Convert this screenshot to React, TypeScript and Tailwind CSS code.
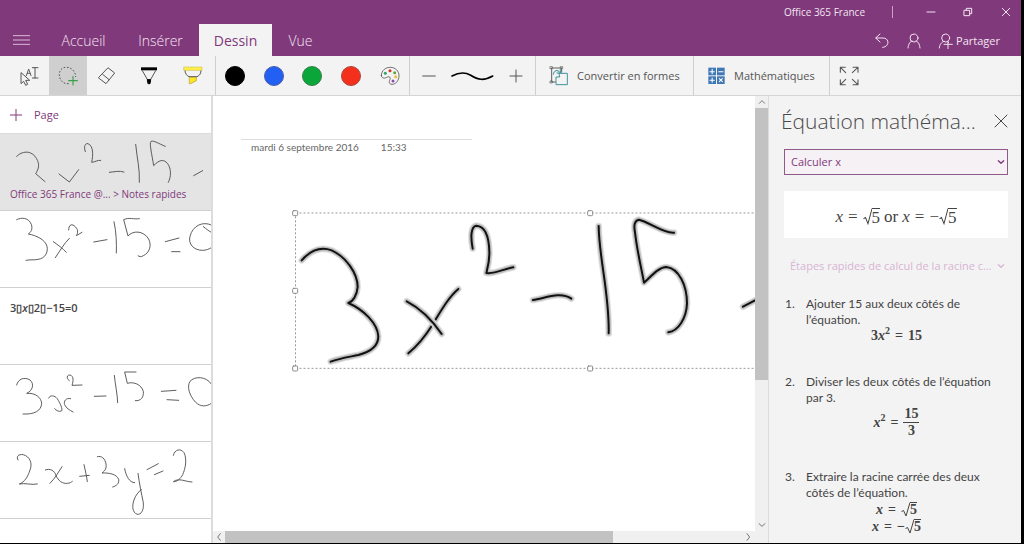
import type { ReactNode } from "react";

const ui = "font-['Open_Sans','Noto_Sans',sans-serif]";
const serif = "font-['Liberation_Serif',serif]";

function Icon({ box, className, children }: { box: string; className: string; children: ReactNode }) {
  return (
    <svg
      viewBox={box}
      className={className}
      fill="none"
      stroke="currentColor"
      strokeWidth={3}
      strokeLinecap="round"
      strokeLinejoin="round"
      aria-hidden="true"
    >
      {children}
    </svg>
  );
}

function Tab({ label, width, active }: { label: string; width: string; active?: boolean }) {
  return (
    <button
      type="button"
      className={`${width} h-full shrink-0 pt-px text-[14px] leading-4 ${
        active ? "bg-[#f3f3f3] text-[#80397b]" : "font-light text-[#f5e6f3]"
      }`}
    >
      {label}
    </button>
  );
}

function TitleBar() {
  return (
    <div className="flex h-6 items-center justify-end text-[#f3e4f1]">
      <span className="text-[10px] leading-4">Office 365 France</span>
      <span className="ml-[27px] h-3 w-px bg-[#c9a3c6]" />
      <button type="button" aria-label="Réduire" className="ml-5 flex w-9 justify-center">
        <Icon box="0 0 30 30" className="size-[10px]">
          <path d="M3 15h24" />
        </Icon>
      </button>
      <button type="button" aria-label="Niveau inférieur" className="flex w-[38px] justify-center">
        <Icon box="0 0 30 30" className="size-[10px]">
          <path d="M4 10h16v16H4zM10 9V4h16v16h-5" />
        </Icon>
      </button>
      <button type="button" aria-label="Fermer" className="flex w-[34px] justify-end pr-[10px]">
        <Icon box="0 0 30 30" className="size-[10px]">
          <path d="M4 4l22 22M26 4L4 26" />
        </Icon>
      </button>
    </div>
  );
}

function TabBar() {
  return (
    <div className="flex h-8 items-stretch">
      <button type="button" aria-label="Menu" className="flex w-[45px] items-center pl-[13px] text-[#e8cfe6]">
        <Icon box="0 0 51 36" className="h-3 w-[17px]">
          <path d="M1 5h49M1 18h49M1 31h49" strokeWidth={2.6} />
        </Icon>
      </button>
      <nav className="flex">
        <Tab label="Accueil" width="w-[77px]" />
        <Tab label="Insérer" width="w-[77px]" />
        <Tab label="Dessin" width="w-[73px]" active />
        <Tab label="Vue" width="w-[57px]" />
      </nav>
      <div className="ml-auto flex items-center pt-px pr-[21px] text-[#f3e4f1]">
        <button type="button" aria-label="Annuler" className="mr-4">
          <Icon box="584 98 48 48" className="size-4">
            <path d="M602 101l-13 12 13 12M590 113h21c20 0 20 27-1 28" />
          </Icon>
        </button>
        <button type="button" aria-label="Compte" className="mr-4">
          <Icon box="680 98 48 48" className="size-4">
            <circle cx="704" cy="113" r="12" />
            <path d="M686 143c1-13 7-20 12-21M722 143c-1-13-7-20-12-21" />
          </Icon>
        </button>
        <button type="button" className="flex items-center gap-[3px] text-[11px] leading-4">
          <Icon box="778 98 45 48" className="h-4 w-[15px]">
            <circle cx="801" cy="113" r="12" />
            <path d="M782 143c1-13 8-18 14-20M806 123l4 4M796 132h25M808 122v23" />
          </Icon>
          Partager
        </button>
      </div>
    </div>
  );
}

const swatches = [
  { name: "Noir", color: "bg-black border-black" },
  { name: "Bleu", color: "bg-[#2160f3] border-[#4a5ea8]" },
  { name: "Vert", color: "bg-[#0ba63a] border-[#35804a]" },
  { name: "Rouge", color: "bg-[#f4301c] border-[#a8463c]" },
];

function Toolbar() {
  const tool = "flex h-full shrink-0 items-center justify-center";
  return (
    <div className="flex h-10 shrink-0 items-stretch border-b border-[#d5d5d5] bg-[#f3f3f3] text-[#555]">
      <div className="flex w-[216px] shrink-0 border-r border-[#cfcfcf] pl-[11px]">
        <button type="button" aria-label="Sélectionner" className={`${tool} w-[38px]`}>
          <Icon box="54 191 72 72" className="size-6">
            <path d="M63 218v32l8-7 6 12 6-3-6-12h11z" strokeWidth={3} />
            <path d="M79 226l7-20 7 20M82 219h9" strokeWidth={2.8} />
            <path d="M97 202h17M105 202v31M97 233h17" strokeWidth={3} />
          </Icon>
        </button>
        <button type="button" aria-label="Sélection au lasso" className={`${tool} w-[38px] bg-[#cfcfcf]`}>
          <Icon box="168 191 72 72" className="size-6">
            <path
              d="M206 250c-18 2-28-13-28-27 0-14 9-23 22-22 16 0 27 15 27 29"
              strokeDasharray="5 5"
              strokeWidth={3}
              strokeLinecap="butt"
            />
            <path d="M219 228v26M206 241h26" stroke="#3f9f48" strokeWidth={3.4} />
          </Icon>
        </button>
        <button type="button" aria-label="Gomme" className={`${tool} w-10`}>
          <Icon box="285 191 72 72" className="size-6">
            <path d="M325 203l19 15-26 32-22-17zM308 222l19 16" />
          </Icon>
        </button>
        <button type="button" aria-label="Stylet" className={`${tool} w-11`}>
          <Icon box="408 191 72 72" className="size-6">
            <rect x="420" y="201" width="48" height="9" fill="#000" stroke="none" />
            <path d="M424 211l16 28h8l16-28" />
            <path d="M440 238h9l-2 12h-5z" fill="#000" stroke="#000" />
          </Icon>
        </button>
        <button type="button" aria-label="Surligneur" className={`${tool} w-11`}>
          <Icon box="543 191 72 72" className="size-6">
            <rect x="552" y="200" width="54" height="10" fill="#fff04a" stroke="#c4b53c" strokeWidth={1.5} />
            <path d="M555 212c1 9 6 14 12 17h24c7-3 11-8 12-17" />
            <path d="M569 231h20v10l-17 9h-3z" fill="#ffe61f" stroke="#a89a2c" strokeWidth={2} />
          </Icon>
        </button>
      </div>

      <div className="grid w-[194px] shrink-0 grid-cols-5 border-r border-[#cfcfcf]">
        {swatches.map((s) => (
          <button key={s.name} type="button" aria-label={s.name} className="flex items-center justify-center">
            <span className={`size-5 rounded-full border ${s.color}`} />
          </button>
        ))}
        <button type="button" aria-label="Autres couleurs" className="flex items-center justify-center">
          <Icon box="112 191 72 72" className="size-6">
            <path
              d="M122 225c1-16 13-24 27-24 15 0 26 11 26 25 0 15-10 26-21 26-9 0-10-8-6-14 3-6-2-11-8-8-7 5-18 5-18-5z"
              strokeWidth={2.5}
            />
            <g stroke="none">
              <circle cx="134" cy="219" r="4.5" fill="#2fa36b" />
              <circle cx="148" cy="211" r="4.5" fill="#d9302a" />
              <circle cx="162" cy="217" r="4.5" fill="#58a83a" />
              <circle cx="165" cy="229" r="4.5" fill="#e5c22e" />
              <circle cx="157" cy="242" r="4.5" fill="#8d4ab0" />
            </g>
          </Icon>
        </button>
      </div>

      <div className="flex w-[126px] shrink-0 border-r border-[#cfcfcf]">
        <button type="button" aria-label="Plus fin" className={`${tool} w-[38px]`}>
          <Icon box="0 0 42 42" className="size-[14px]">
            <path d="M2 21h38" />
          </Icon>
        </button>
        <span className="flex flex-1 items-center justify-center text-black">
          <Icon box="330 206 135 42" className="h-[14px] w-[45px]">
            <path d="M336 227c19-10 38-13 56-2 22 14 40 17 66 2" strokeWidth={5} />
          </Icon>
        </span>
        <button type="button" aria-label="Plus épais" className={`${tool} w-[38px]`}>
          <Icon box="0 0 42 42" className="size-[14px]">
            <path d="M3 21h36M21 3v36" />
          </Icon>
        </button>
      </div>

      <button
        type="button"
        className="flex w-[158px] shrink-0 items-center gap-2 border-r border-[#cfcfcf] pl-[13px] text-[11px] leading-4 whitespace-nowrap"
      >
        <Icon box="625 191 60 72" className="h-6 w-5 shrink-0">
          <path d="M644 245h-11v-42h30v13" strokeWidth={2.8} />
          <path d="M629 199h6v6h-6zM660 199h6v6h-6zM629 242h6v6h-6z" strokeWidth={2} />
          <path d="M638 222c2-12 12-16 20-6M659 208v10h-10" stroke="#2e8c96" />
          <path d="M656 219h24v34h-34v-23h10z" stroke="#43929b" />
        </Icon>
        Convertir en formes
      </button>

      <button
        type="button"
        className="flex w-[136px] shrink-0 items-center gap-2 border-r border-[#cfcfcf] pl-[13px] text-[11px] leading-4"
      >
        <Icon box="81 200 57 54" className="h-[18px] w-[19px] shrink-0">
          <g fill="#3f78b5" stroke="none">
            <rect x="85" y="202" width="23" height="23" />
            <rect x="111" y="202" width="23" height="23" />
            <rect x="85" y="228" width="23" height="23" />
            <rect x="111" y="228" width="23" height="23" />
          </g>
          <path
            d="M90 214h13M96.500 207v13M116 214h13M90 240h13M96.500 233v13M118 235l9 9M127 235l-9 9"
            stroke="#fff"
            strokeWidth={3.2}
          />
        </Icon>
        Mathématiques
      </button>

      <button type="button" aria-label="Plein écran" className="pl-[7px]">
        <Icon box="472 191 72 72" className="size-6">
          <path d="M482 216v-15h15M483 202l15 15M520 201h15v15M534 202l-16 15M482 238v15h15M483 252l15-15M520 253h15v-15M534 252l-16-15" strokeWidth={3.2} />
        </Icon>
      </button>
    </div>
  );
}

function PageRow({ box, paths, label, selected }: { box?: string; paths?: string; label?: ReactNode; selected?: boolean }) {
  return (
    <li className={`relative h-[77px] shrink-0 overflow-hidden border-b border-[#d0d0d0] ${selected ? "bg-[#e4e4e4]" : ""}`}>
      <a href="#page" className="block h-full">
        {paths && (
          <svg
            viewBox={box}
            className="h-[77px] w-[211px]"
            fill="none"
            stroke="#4c4c4c"
            strokeWidth={2.7}
            strokeLinecap="round"
            strokeLinejoin="round"
            aria-hidden="true"
          >
            <path d={paths} />
          </svg>
        )}
        {label}
      </a>
    </li>
  );
}

function Sidebar() {
  return (
    <aside className="flex w-[213px] shrink-0 flex-col overflow-hidden border-r-2 border-[#dcdcdc] bg-white">
      <button
        type="button"
        className="flex h-[38px] shrink-0 items-center gap-3 border-b border-[#dcdcdc] pl-[10px] text-[11px] leading-4 text-[#80397b]"
      >
        <Icon box="0 0 36 36" className="size-3">
          <path d="M1 18h34M18 1v34" />
        </Icon>
        Page
      </button>
      <ul className="flex flex-col">
        <PageRow
          selected
          box="0 117 633 231"
          paths="M50 184C66 168 90 166 105 184C118 201 120 216 107 236L135 260M177 237L208 261L236 224M256 170C250 154 256 144 264 146C280 152 280 180 275 202C283 202 294 194 302 196M328 232C342 231 358 226 372 231M407 148C411 190 420 222 418 262M496 154C476 146 462 136 453 139C447 143 456 180 461 212C476 196 490 190 503 206C514 222 514 244 505 262M581 242L608 227"
          label={
            <span className="absolute bottom-[10px] left-[10px] text-[10px] leading-3 whitespace-nowrap text-[#80397b]">
              Office 365 France @... &gt; Notes rapides
            </span>
          }
        />
        <PageRow
          box="0 348 633 231"
          paths="M50 374C64 366 86 368 94 388C99 404 92 412 85 417C108 421 136 434 141 454C145 474 134 490 115 493C103 496 90 493 78 496M160 440C174 450 188 460 199 472M208 430C192 446 178 470 166 488M206 405C206 390 214 386 222 392C236 402 234 414 229 422L246 412M281 441L321 434M342 380C349 412 350 444 349 474M418 371C402 374 388 366 371 374L384 423C398 406 430 406 446 432C456 452 448 474 430 482C424 486 418 486 414 482M496 440L537 429M515 470L540 470M634 390C608 378 578 392 570 424C564 446 580 466 608 466C618 466 628 462 634 458M610 395C620 402 628 410 634 412"
        />
        <PageRow
          label={
            <span className="flex h-full items-center pb-9 pl-[10px] text-[11px] leading-3 font-semibold text-[#444]">
              3▯<i>x</i>▯2▯−15=0
            </span>
          }
        />
        <PageRow
          box="0 135 633 231"
          paths="M50 195C54 176 74 170 90 180C104 192 98 212 80 220C108 218 124 234 125 250C124 272 104 284 69 282M146 234C150 224 164 226 172 236C180 250 190 268 184 273C178 276 168 272 164 266M212 236C198 232 190 244 194 254C198 264 208 270 219 276M208 182C198 176 200 164 210 165C222 168 220 184 216 196L246 195M283 229L318 228M343 166C346 196 352 220 353 248M408 156L374 156L382 190C402 184 424 194 430 214C432 232 422 244 406 242M484 214L528 211M501 239L536 241M634 192C618 168 584 168 570 184C560 200 568 226 586 246C602 262 620 260 634 250"
        />
        <PageRow
          box="0 366 633 231"
          paths="M54 420C48 410 54 402 70 404C90 410 98 430 90 450C84 470 74 486 58 492C74 488 96 496 112 492M136 450C150 444 164 452 168 466C174 482 188 492 202 490C210 490 214 486 217 484M186 440C178 452 166 474 150 490M239 469L268 466M252 434C256 452 260 470 262 485M292 410C304 406 316 416 318 432C320 444 316 452 306 459C326 458 350 462 356 478C358 490 350 498 338 501M374 446C378 468 388 488 404 488M414 460C418 490 424 520 430 548C432 570 424 584 412 583C396 578 396 556 402 540C406 526 416 516 424 508M441 449L475 431M463 464L489 453M520 406C524 388 542 384 552 398C562 418 556 446 548 464C542 476 530 486 520 485C536 472 558 486 576 486"
        />
      </ul>
    </aside>
  );
}

const strokes = [
  "M260 496C290 462 322 456 350 466C394 486 428 536 428 576C426 600 414 620 400 624C446 644 488 686 490 724C490 750 470 770 430 780C402 786 374 790 347 800",
  "M730 582C704 604 684 636 652 690C628 728 608 752 580 775",
  "M575 619C616 640 652 676 680 717",
  "M773 461C766 424 768 394 784 392C812 394 822 430 823 470C824 498 818 518 814 534C842 538 868 520 895 517",
  "M954 615C990 610 1036 588 1069 611",
  "M1151 393C1152 490 1184 600 1181 715",
  "M1377 413C1346 416 1300 380 1272 374C1258 376 1256 392 1260 412C1266 466 1278 514 1287 563C1316 536 1334 516 1354 516C1392 520 1416 572 1416 626C1414 670 1390 708 1360 712",
  "M1584 635L1640 606",
];

const handles = [
  [240, 354],
  [1125, 354],
  [240, 587],
  [240, 820],
  [1125, 820],
];

function Canvas() {
  return (
    <main className="min-w-0 flex-1 overflow-hidden bg-white">
      <div className="ml-7 mt-[43px] w-[231px] border-t border-[#dedede]" />
      <p className="ml-[38px] mt-px flex gap-[22px] font-['Lato',sans-serif] text-[10px] leading-3 text-[#666]">
        <span>mardi 6 septembre 2016</span>
        <span>15:33</span>
      </p>
      <svg
        viewBox="222 333 1806 504"
        className="ml-[76px] mt-[53px] h-[168px] w-[602px]"
        fill="none"
        strokeLinecap="round"
        strokeLinejoin="round"
        role="img"
        aria-label="3x² − 15"
      >
        <rect x="241.500" y="354" width="1768" height="466" stroke="#999" strokeWidth={3} strokeDasharray="6 6" strokeLinecap="butt" />
        {strokes.map((d) => (
          <g key={d}>
            <path d={d} stroke="#e0e0e0" strokeWidth={20} />
            <path d={d} stroke="#bdbdbd" strokeWidth={14} />
            <path d={d} stroke="#111" strokeWidth={6} />
          </g>
        ))}
        {handles.map(([x, y]) => (
          <rect key={`${x}-${y}`} x={x - 7} y={y - 7} width={15} height={15} rx={3} fill="#fff" stroke="#8a8a8a" strokeWidth={3} />
        ))}
      </svg>
    </main>
  );
}

function Notebook() {
  return (
    <div className="flex min-w-0 flex-1 flex-col">
      <div className="flex min-h-0 flex-1">
        <Canvas />
        <div className="flex w-[13px] shrink-0 flex-col items-center bg-[#f0f0f0] text-[#777]">
          <Icon box="0 0 36 36" className="size-3 shrink-0">
            <path d="M10 22l8-8 8 8" />
          </Icon>
          <div className="h-[272px] w-full bg-[#c2c2c2]" />
          <Icon box="0 0 36 36" className="mt-auto size-3 shrink-0">
            <path d="M9 14l9 8 9-8" />
          </Icon>
        </div>
      </div>
      <div className="flex h-3 shrink-0 items-center bg-[#f0f0f0] text-[#777]">
        <Icon box="0 0 36 36" className="size-3">
          <path d="M22 8l-8 10 8 10" />
        </Icon>
        <div className="h-full w-[388px] bg-[#c2c2c2]" />
        <Icon box="0 0 36 36" className="ml-auto mr-[13px] size-3">
          <path d="M12 8l8 10-8 10" />
        </Icon>
      </div>
    </div>
  );
}

function Root({ children }: { children: ReactNode }) {
  return (
    <span className="inline-flex items-stretch leading-none">
      <svg viewBox="0 0 9 16" preserveAspectRatio="none" className="h-auto w-[9px]" fill="none" stroke="currentColor" aria-hidden="true">
        <path d="M0.500 9.500L2.500 8.500L5 14L9 0.500" strokeWidth={1} />
      </svg>
      <span className="border-t border-current">{children}</span>
    </span>
  );
}

function Eq() {
  return <span className="mx-[5px]">=</span>;
}

function Sq() {
  return <sup className="text-[10px] leading-none">2</sup>;
}

function Step({ n, text, children }: { n: number; text: ReactNode; children: ReactNode }) {
  return (
    <li>
      <div className="flex">
        <span className="w-[21px] shrink-0">{n}.</span>
        <p className="w-[194px]">{text}</p>
      </div>
      <div className={`${serif} flex flex-col items-center text-[14px] leading-4 font-bold text-[#444]`}>
        {children}
      </div>
    </li>
  );
}

function MathPane() {
  return (
    <aside className="w-[253px] shrink-0 overflow-hidden border-l border-[#dcdcdc] bg-[#f3f3f3] pl-[15px] pr-[13px]">
      <div className="flex h-[53px] items-center justify-between pb-1">
        <h2 className="-ml-[3px] truncate text-[21px] leading-7 font-light text-[#4a4a4a]">Équation mathéma...</h2>
        <button type="button" aria-label="Fermer le volet" className="shrink-0 text-[#444]">
          <Icon box="0 0 42 42" className="size-[14px]">
            <path d="M3 3l36 36M39 3L3 39" />
          </Icon>
        </button>
      </div>
      <div className="grid items-center text-[#80397b]">
        <select
          aria-label="Action"
          className="col-start-1 row-start-1 h-[26px] w-full appearance-none border border-[#8d5a89] bg-[#f5f1f5] pl-[6px] text-[11px] leading-4"
        >
          <option>Calculer x</option>
        </select>
        <Icon box="0 0 24 24" className="pointer-events-none col-start-1 row-start-1 mr-[3px] size-2 justify-self-end">
          <path d="M4 8l8 8 8-8" strokeWidth={4} />
        </Icon>
      </div>
      <div className={`${serif} mt-4 flex h-[47px] items-center justify-center bg-white pt-1 text-[17px] leading-5 text-[#444]`}>
        <i>x</i>
        <Eq />
        <Root>5</Root>
        <span className="mx-1">or</span>
        <i>x</i>
        <Eq />
        <span>−</span>
        <Root>5</Root>
      </div>
      <button
        type="button"
        className="mt-5 flex w-full items-center justify-between pl-[6px] pr-[3px] text-[11px] leading-4 text-[#d9b4d5]"
      >
        <span className="truncate">Étapes rapides de calcul de la racine c...</span>
        <Icon box="0 0 24 24" className="size-2 shrink-0">
          <path d="M4 8l8 8 8-8" strokeWidth={4} />
        </Icon>
      </button>
      <ol className="mt-[22px] flex flex-col gap-[30px] pl-px font-['Lato',sans-serif] text-[12px] leading-4 text-[#444]">
        <Step n={1} text="Ajouter 15 aux deux côtés de l’équation.">
          <span className="flex items-center">
            3<i>x</i>
            <Sq />
            <Eq />
            15
          </span>
        </Step>
        <Step n={2} text="Diviser les deux côtés de l’équation par 3.">
          <span className="flex items-center">
            <i>x</i>
            <Sq />
            <Eq />
            <span className="flex flex-col text-center">
              <span className="border-b border-current px-px">15</span>
              <span>3</span>
            </span>
          </span>
        </Step>
        <Step n={3} text="Extraire la racine carrée des deux côtés de l’équation.">
          <span className="flex h-[17px] items-center">
            <i>x</i>
            <Eq />
            <Root>5</Root>
          </span>
          <span className="flex h-[17px] items-center">
            <i>x</i>
            <Eq />
            <span>−</span>
            <Root>5</Root>
          </span>
        </Step>
      </ol>
    </aside>
  );
}

export default function App() {
  return (
    <div className={`${ui} flex h-screen flex-col overflow-hidden border-r-[3px] border-b border-black bg-white`}>
      <header className="shrink-0 bg-[#80397b]">
        <TitleBar />
        <TabBar />
      </header>
      <Toolbar />
      <div className="flex min-h-0 flex-1">
        <Sidebar />
        <Notebook />
        <MathPane />
      </div>
    </div>
  );
}
